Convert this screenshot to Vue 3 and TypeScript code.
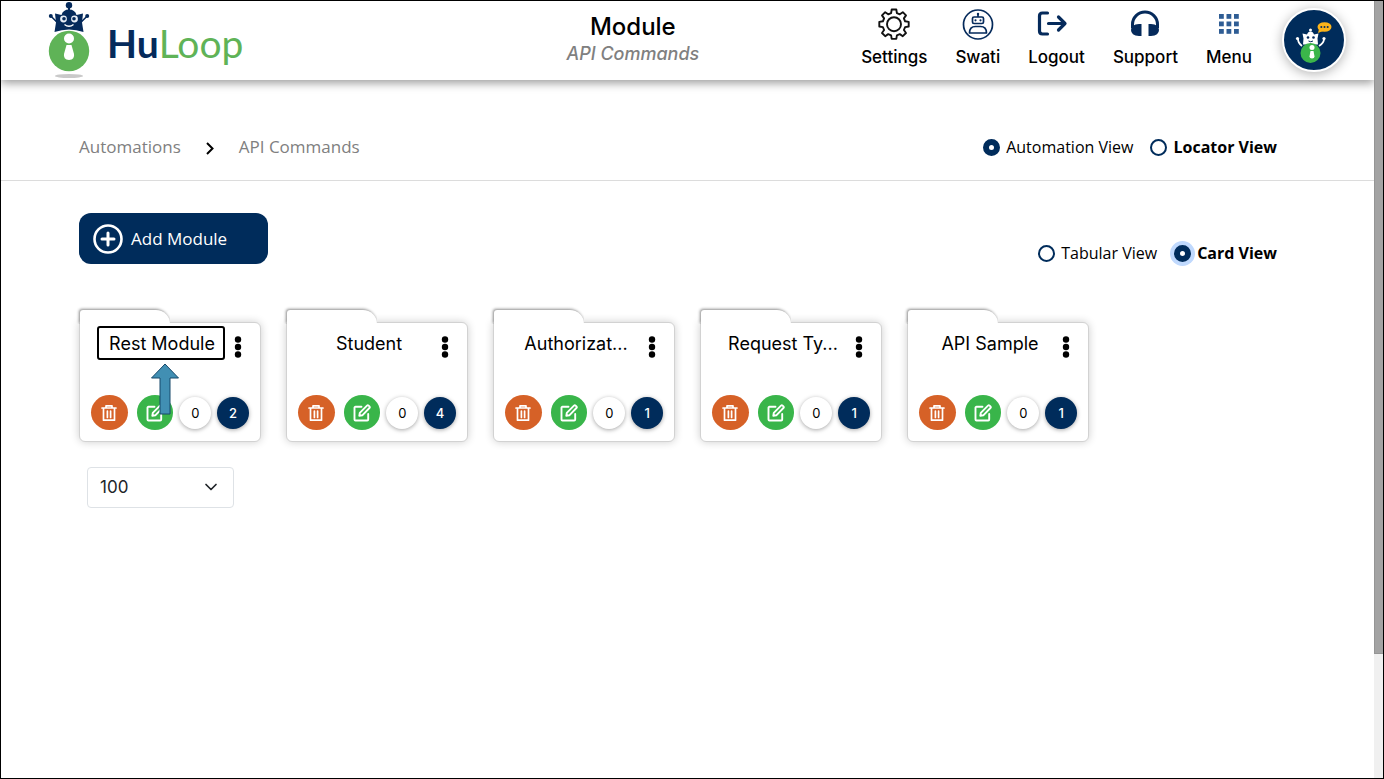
<script setup lang="ts">
import { ref } from 'vue'

interface ModuleCard {
  title: string
  pending: number
  total: number
  highlighted?: boolean
}

const modules: ModuleCard[] = [
  { title: 'Rest Module', pending: 0, total: 2, highlighted: true },
  { title: 'Student', pending: 0, total: 4 },
  { title: 'Authorizat...', pending: 0, total: 1 },
  { title: 'Request Ty...', pending: 0, total: 1 },
  { title: 'API Sample', pending: 0, total: 1 },
]

const scope = ref('automation')
const layout = ref('card')
const pageSize = ref(100)
const gridCells = [0, 1, 2, 3, 4, 5, 6, 7, 8]
</script>

<template>
  <div class="window">
    <div class="page">
      <header class="topbar">
        <a class="brand" href="#">
          <svg class="brand-bot" viewBox="0 0 42 78" aria-hidden="true">
            <ellipse cx="21" cy="75" rx="14" ry="2" fill="#c9c9c9" />
            <circle cx="21" cy="4.200" r="3.200" fill="#052a5b" />
            <path d="M20 6h2v4h-2z" fill="#052a5b" />
            <circle cx="2.800" cy="15" r="2" fill="#052a5b" />
            <circle cx="39.200" cy="15" r="2" fill="#052a5b" />
            <path d="M2.800 15l6 6M39.200 15l-6 6" stroke="#052a5b" stroke-width="1.600" />
            <path d="M7 12.500l6.500 1.500q1.500-5.500 7.500-5.500t7.500 5.500l6.500-1.500-1 9 1.500 9.500q-14.500-5-29 0l1.500-9.500z" fill="#052a5b" />
            <circle cx="15.500" cy="18" r="3.400" fill="#e7edf5" />
            <circle cx="26.500" cy="18" r="3.400" fill="#e7edf5" />
            <circle cx="16" cy="17.800" r="1.800" fill="#052a5b" />
            <circle cx="26" cy="17.800" r="1.800" fill="#052a5b" />
            <path d="M16.500 23.500q4.500 3.500 9 0" fill="none" stroke="#fff" stroke-width="1.400" />
            <circle cx="21" cy="50" r="20.200" fill="#5fb357" />
            <circle cx="21" cy="37.500" r="5" fill="#fff" />
            <path d="M18.500 44h5l2.500 9q1 5.500-5 6-6-.5-5-6z" fill="#fff" />
          </svg>
          <span class="brand-name"><b>Hu</b>Loop</span>
        </a>

        <div class="heading">
          <h1>Module</h1>
          <p>API Commands</p>
        </div>

        <nav class="actions">
          <a href="#" class="action">
            <svg class="icon" viewBox="0 0 32 32" aria-hidden="true">
              <g fill="none" stroke="#111" stroke-width="1.900" stroke-linejoin="round">
                <path d="M13.700 1.500h4.600l.6 3.600 2.900 1.200 3-2.100 3.200 3.200-2.100 3 1.200 2.900 3.600.6v4.600l-3.600.6-1.200 2.900 2.100 3-3.200 3.200-3-2.100-2.900 1.200-.6 3.600h-4.600l-.6-3.600-2.900-1.200-3 2.100-3.200-3.200 2.100-3-1.200-2.900-3.600-.6v-4.600l3.600-.6 1.200-2.900-2.100-3 3.200-3.200 3 2.100 2.900-1.200z" />
                <circle cx="16" cy="16.200" r="7" />
              </g>
            </svg>
            <span>Settings</span>
          </a>
          <a href="#" class="action">
            <svg class="icon" viewBox="0 0 32 32" aria-hidden="true">
              <g fill="none" stroke="#052a5b" stroke-width="1.700">
                <circle cx="16" cy="16.500" r="14.500" />
                <rect x="10.500" y="9" width="11" height="6.500" rx="1.500" />
                <path d="M16 9v-3M7.500 25q0-6.500 6-6.500h5q6 0 6 6.500z" stroke-linejoin="round" />
              </g>
              <g fill="#052a5b">
                <circle cx="16" cy="6" r="1.200" />
                <circle cx="13.500" cy="12.300" r="1.100" />
                <circle cx="18.500" cy="12.300" r="1.100" />
              </g>
            </svg>
            <span>Swati</span>
          </a>
          <a href="#" class="action">
            <svg class="icon" viewBox="0 0 32 32" aria-hidden="true">
              <path d="M6.500 5H1.500q-3 0-3 3v15q0 3 3 3h5M7.500 15.500H23.500M17.500 9l6.500 6.500-6.500 6.500" fill="none" stroke="#052a5b" stroke-width="3.200" stroke-linecap="round" stroke-linejoin="round" />
            </svg>
            <span>Logout</span>
          </a>
          <a href="#" class="action">
            <svg class="icon" viewBox="0 0 32 32" aria-hidden="true">
              <path d="M3.500 20v-3.500a12.500 12.500 0 0 1 25 0v3.500" fill="none" stroke="#052a5b" stroke-width="3" />
              <path d="M12.500 16v12h-2.500q-8-.5-8-6t8-6zM19.500 16v12h2.500q8-.5 8-6t-8-6z" fill="#052a5b" />
            </svg>
            <span>Support</span>
          </a>
          <a href="#" class="action">
            <svg class="icon" viewBox="0 0 32 32" aria-hidden="true">
              <rect v-for="n in gridCells" :key="n" :x="6 + (n % 3) * 7.5" :y="6 + Math.floor(n / 3) * 7.5" width="4.800" height="4.800" fill="#2f5d94" />
            </svg>
            <span>Menu</span>
          </a>
          <button class="assistant" type="button" aria-label="Assistant">
            <svg viewBox="0 0 60 60" aria-hidden="true">
              <ellipse cx="40.500" cy="17" rx="7" ry="4.800" fill="#fbb41a" />
              <path d="M35 19l-1 4 5-2z" fill="#fbb41a" />
              <g fill="#052a5b">
                <circle cx="37.300" cy="17" r="1" />
                <circle cx="40.500" cy="17" r="1" />
                <circle cx="43.700" cy="17" r="1" />
              </g>
              <path d="M18 36q-4-3-4-7M35 36q5-3 5-7" fill="none" stroke="#fff" stroke-width="1.800" />
              <circle cx="13.500" cy="28.500" r="1.600" fill="#fff" />
              <circle cx="40" cy="28.500" r="1.600" fill="#fff" />
              <circle cx="26.500" cy="20" r="1.500" fill="#fff" />
              <path d="M18.500 23.500l4.500 1q1-3 3.500-3t3.500 3l4.500-1-1 5 .5 6H19l.5-6z" fill="#fff" />
              <circle cx="24" cy="27.500" r="1.300" fill="#052a5b" />
              <circle cx="29.500" cy="27.500" r="1.300" fill="#052a5b" />
              <path d="M24.500 31q2.200 1.500 4.500 0" fill="none" stroke="#052a5b" />
              <circle cx="26.500" cy="43" r="10" fill="#3bb54a" />
              <circle cx="28" cy="37.500" r="2.500" fill="#fff" />
              <path d="M26.500 41h3l1 5.500q0 2-2.500 2t-2.500-2z" fill="#fff" />
            </svg>
          </button>
        </nav>
      </header>

      <div class="subbar">
        <nav class="crumbs">
          <a href="#">Automations</a>
          <svg viewBox="0 0 12 16" aria-hidden="true">
            <path d="M3 4l5.500 5.500L3 15" fill="none" stroke="#000" stroke-width="2" />
          </svg>
          <a href="#">API Commands</a>
        </nav>
        <div class="choices">
          <label><input v-model="scope" type="radio" name="scope" value="automation" />Automation View</label>
          <label class="strong"><input v-model="scope" type="radio" name="scope" value="locator" />Locator View</label>
        </div>
      </div>

      <main class="content">
        <div class="toolbar">
          <button class="add" type="button">
            <svg viewBox="0 0 30 30" aria-hidden="true">
              <circle cx="15" cy="15" r="13.500" fill="none" stroke="#fff" stroke-width="2.600" />
              <path d="M15 9v12M9 15h12" stroke="#fff" stroke-width="3" stroke-linecap="round" />
            </svg>
            Add Module
          </button>
          <div class="choices">
            <label><input v-model="layout" type="radio" name="layout" value="tabular" />Tabular View</label>
            <label class="strong"><input v-model="layout" class="halo" type="radio" name="layout" value="card" />Card View</label>
          </div>
        </div>

        <section class="cards">
          <article v-for="item in modules" :key="item.title" class="card">
            <div class="card-head">
              <h2>{{ item.title }}</h2>
              <button class="kebab" type="button" aria-label="More options">
                <svg viewBox="0 0 8 22" aria-hidden="true">
                  <circle cx="4" cy="3.500" r="3.200" />
                  <circle cx="4" cy="11" r="3.200" />
                  <circle cx="4" cy="18.500" r="3.200" />
                </svg>
              </button>
            </div>
            <div class="card-foot">
              <button class="round delete" type="button" aria-label="Delete">
                <svg viewBox="0 0 18 18" aria-hidden="true">
                  <path d="M2 4h14M6 3.500V1.800h6v1.700M3.500 4v12.200h11V4M7.400 7v6.500M10.600 7v6.500" fill="none" stroke="#fff" stroke-width="1.700" stroke-linejoin="round" stroke-linecap="round" />
                </svg>
              </button>
              <button class="round edit" type="button" aria-label="Edit">
                <svg viewBox="0 0 18 18" aria-hidden="true">
                  <path d="M8.500 2.800H2.500q-1 0-1 1v11.700q0 1 1 1h11.700q1 0 1-1V10M6.300 11.800l.5-3L14 1.600q.8-.7 1.600 0l.8.8q.8.800 0 1.600L9.300 11.300z" fill="none" stroke="#fff" stroke-width="1.900" stroke-linejoin="round" stroke-linecap="round" />
                </svg>
              </button>
              <span class="count">{{ item.pending }}</span>
              <span class="count filled">{{ item.total }}</span>
            </div>
            <template v-if="item.highlighted">
              <span class="callout"></span>
              <svg class="pointer" viewBox="0 0 30 52" aria-hidden="true">
                <path d="M15 1l13.500 14H20v36H10V15H1.500z" fill="#418fb3" stroke="#17496b" stroke-width="1" />
              </svg>
            </template>
          </article>
        </section>

        <div class="page-size">
          <select v-model="pageSize" aria-label="Modules per page">
            <option :value="25">25</option>
            <option :value="50">50</option>
            <option :value="100">100</option>
          </select>
          <svg viewBox="0 0 14 10" aria-hidden="true">
            <path d="M2 2.500l5 5 5-5" fill="none" stroke="#212529" stroke-width="1.700" stroke-linecap="round" stroke-linejoin="round" />
          </svg>
        </div>
      </main>
    </div>
    <div class="scroll-track"><div class="scroll-thumb"></div></div>
  </div>
</template>

<style>
body {
  margin: 0;
}
</style>

<style scoped>
* {
  box-sizing: border-box;
}

.window {
  display: flex;
  min-height: 100vh;
  border: 1px solid #000;
  background: #fff;
  color: #000;
  font-family: 'Open Sans', 'Noto Sans', sans-serif;
  font-size: 16px;
}

.page {
  flex: 1;
  min-width: 0;
}

a {
  color: inherit;
  text-decoration: none;
}

button {
  padding: 0;
  border: 0;
  color: inherit;
  font: inherit;
  cursor: pointer;
}

svg {
  display: block;
}

.topbar {
  display: flex;
  height: 79px;
  padding-right: 28px;
  box-shadow: 0 3px 9px rgba(0, 0, 0, 0.4);
}

.brand {
  display: flex;
  flex: 0 0 30%;
  align-items: flex-start;
  gap: 17px;
  padding-left: 47px;
}

.brand-bot {
  width: 42px;
  height: 78px;
}

.brand-name {
  margin-top: 19px;
  color: #5fb357;
  font-family: Lato, sans-serif;
  font-size: 39px;
  line-height: 46px;
}

.brand-name b {
  color: #052a5b;
  font-weight: 700;
}

.heading {
  flex: 1;
  padding-top: 10px;
  font-family: Inter, sans-serif;
  text-align: center;
}

.heading h1 {
  margin: 0;
  font-size: 24px;
  font-weight: 500;
  line-height: 32px;
}

.heading p {
  margin: 0;
  color: #808080;
  font-size: 18px;
  font-style: italic;
  font-weight: 500;
  line-height: 22px;
}

.actions {
  display: flex;
  gap: 28px;
  padding-top: 7px;
}

.action {
  display: flex;
  flex-direction: column;
  align-items: center;
  gap: 5px;
  font-family: Inter, sans-serif;
  font-size: 17px;
  font-weight: 500;
  line-height: 24px;
}

.icon {
  width: 32px;
  height: 32px;
  overflow: visible;
}

.assistant {
  width: 64px;
  height: 64px;
  margin-left: 2px;
  border: 2px solid #fff;
  border-radius: 50%;
  background: #002c5b;
  box-shadow: 0 2px 12px rgba(0, 0, 0, 0.3);
}

.subbar {
  display: flex;
  align-items: flex-end;
  justify-content: space-between;
  height: 101px;
  padding: 0 97px 21px 78px;
  border-bottom: 1px solid #dcdcdc;
}

.crumbs {
  display: flex;
  align-items: center;
  gap: 23px;
  color: #808080;
  font-size: 17px;
  line-height: 24px;
}

.crumbs svg {
  width: 12px;
  height: 16px;
}

.choices {
  display: flex;
  gap: 17px;
}

.choices label {
  display: flex;
  align-items: center;
  gap: 6px;
  line-height: 24px;
}

.choices .strong {
  font-weight: 700;
}

.choices input {
  width: 17px;
  height: 17px;
  margin: 0;
  border: 2px solid #002c5b;
  border-radius: 50%;
  appearance: none;
  background: #fff;
}

.choices input:checked {
  border-width: 6px;
}

.choices .halo:checked {
  box-shadow: 0 0 0 4px #c0d9fd;
}

.content {
  padding: 32px 97px 32px 78px;
}

.toolbar {
  display: flex;
  align-items: flex-start;
  justify-content: space-between;
}

.toolbar .choices {
  padding-top: 28px;
}

.add {
  display: flex;
  align-items: center;
  gap: 8px;
  width: 189px;
  height: 51px;
  padding-left: 14px;
  border-radius: 12px;
  background: #002c5b;
  color: #fff;
  font-size: 17px;
}

.add svg {
  width: 30px;
  height: 30px;
}

.cards {
  display: flex;
  flex-wrap: wrap;
  gap: 25px;
  padding-top: 57px;
}

.card {
  position: relative;
  display: flex;
  flex-direction: column;
  justify-content: space-between;
  width: 182px;
  height: 120px;
  padding: 8px 11px 11px 0;
  border: 1px solid #d2d2d2;
  border-radius: 2px 6px 6px 6px;
  background: #fff;
  box-shadow: 0 0 8px rgba(0, 0, 0, 0.2);
}

.card::before {
  content: '';
  position: absolute;
  top: -13px;
  left: 0;
  width: 90px;
  height: 14px;
  border-radius: 4px 18px 0 0;
  background: #fff;
  box-shadow: -1px -1px 3px rgba(0, 0, 0, 0.45);
  clip-path: inset(-6px 0 0 -6px);
}

.card-head {
  display: flex;
  padding-left: 10px;
}

.card h2 {
  flex: 1;
  margin: 0;
  font-family: Inter, sans-serif;
  font-size: 18px;
  font-weight: 400;
  line-height: 26px;
  text-align: center;
  white-space: nowrap;
}

.kebab {
  padding: 5px 7px 0 0;
  background: none;
}

.kebab svg {
  width: 8px;
  height: 22px;
}

.card-foot {
  display: flex;
  align-items: center;
  gap: 6px;
  padding-left: 11px;
}

.round {
  display: flex;
  align-items: center;
  justify-content: center;
  width: 37px;
  height: 35px;
  border-radius: 50%;
}

.round svg {
  width: 18px;
  height: 18px;
}

.delete {
  margin-right: 3px;
  background: #d66127;
}

.edit {
  background: #39b54a;
}

.count {
  width: 32px;
  height: 32px;
  border-radius: 50%;
  background: #fff;
  box-shadow: 0 1px 4px rgba(0, 0, 0, 0.35);
  font-family: Inter, sans-serif;
  font-size: 13px;
  line-height: 32px;
  text-align: center;
}

.count.filled {
  background: #002c5b;
  color: #fff;
  font-weight: 500;
}

.callout {
  position: absolute;
  top: 3px;
  left: 17px;
  width: 128px;
  height: 34px;
  border: 2px solid #000;
  border-radius: 3px;
  pointer-events: none;
}

.pointer {
  position: absolute;
  top: 40px;
  left: 70px;
  width: 30px;
  height: 52px;
  pointer-events: none;
}

.page-size {
  position: relative;
  width: 147px;
  margin: 25px 0 0 8px;
}

.page-size select {
  display: block;
  width: 100%;
  height: 41px;
  padding: 0 12px 2px;
  border: 1px solid #dee2e6;
  border-radius: 4px;
  appearance: none;
  background: #fff;
  color: #212529;
  font-family: Inter, sans-serif;
  font-size: 17px;
}

.page-size svg {
  position: absolute;
  top: 15px;
  right: 16px;
  width: 14px;
  height: 10px;
  pointer-events: none;
}

.scroll-track {
  width: 9px;
  background: #f0f0f0;
}

.scroll-thumb {
  height: 84%;
  border: 1px solid #959595;
  border-width: 0 0 1px 1px;
  background: #a3a3a3;
}
</style>
